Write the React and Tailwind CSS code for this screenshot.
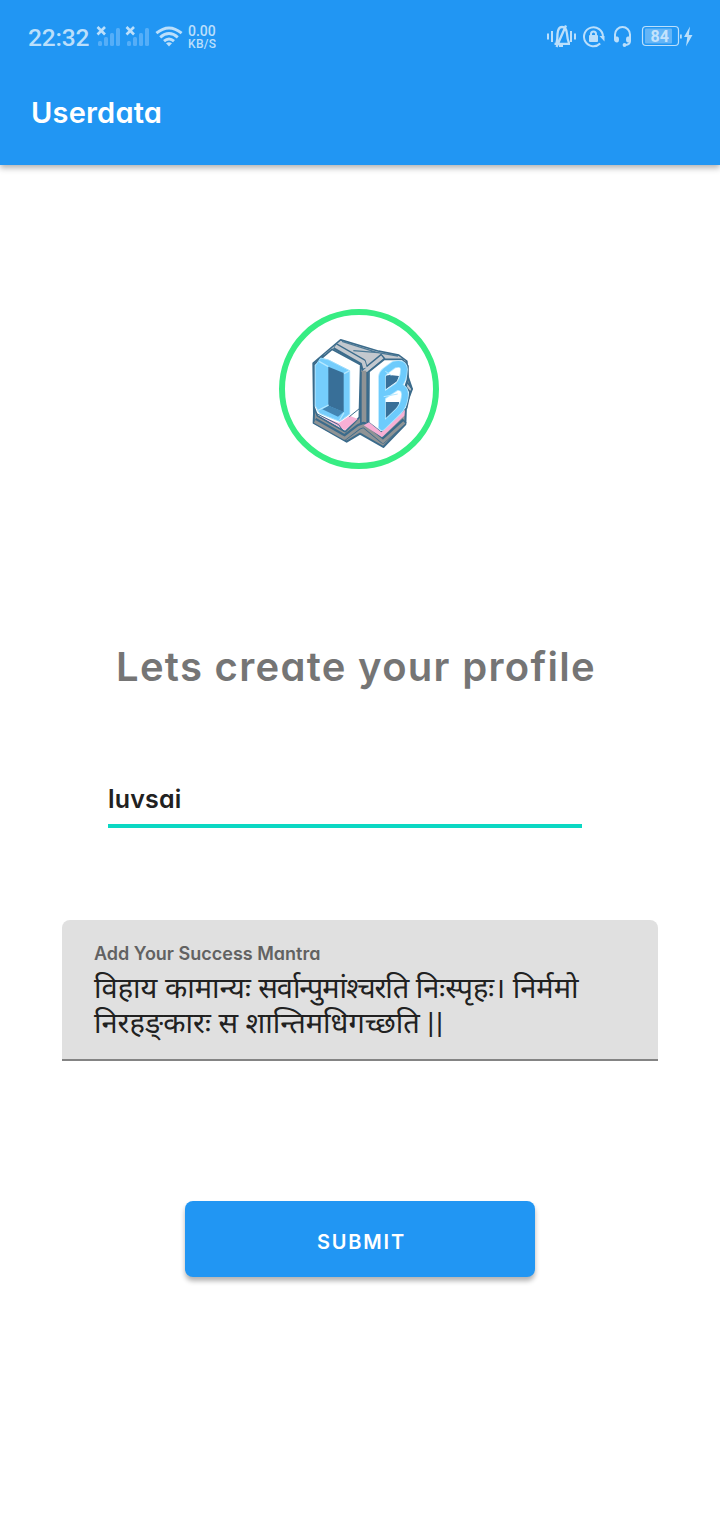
const rounded =
  "font-['Inter',sans-serif] [font-feature-settings:'cv11','ss03'] whitespace-nowrap";

function Signal() {
  return (
    <svg width="25" height="22" viewBox="0 0 25 22">
      <g fill="#55aef8">
        <rect x="2" y="15" width="4" height="5" rx="1.5" />
        <rect x="8" y="11" width="4" height="9" rx="1.5" />
        <rect x="14" y="7" width="4" height="13" rx="1.5" />
        <rect x="20" y="2" width="4" height="18" rx="1.5" />
      </g>
      <path d="M1.5 1l7.500 7.500M9 1l-7.500 7.500" stroke="#bbdffb" strokeWidth="2.6" />
    </svg>
  );
}

function Wifi() {
  return (
    <svg width="28" height="22" viewBox="0 0 28 22" fill="none" stroke="#bbdffb" strokeWidth="2.9">
      <path d="M1.400 7.200Q14-3.200 26.600 7.200M5.200 11.400q8.800-7.600 17.600 0M9 15.200q5-4.400 10 0" />
      <path d="M11 17.200q3-2 6 0l-3 3.300z" fill="#bbdffb" stroke="none" />
    </svg>
  );
}

function StatusIcons() {
  return (
    <svg width="148" height="26" viewBox="546 24 148 26" fill="none" stroke="#bbdffb" strokeWidth="2">
      <path d="M548 33.500v6M552 31v11M571 31v11M575 33.500v6" />
      <path d="M554.500 43.800h15.500M556.500 43q1-3 1-9 .5-7 4.500-7 4.500 0 5 7 .5 6 2 9M566 25.500l-9.500 21.500" strokeWidth="2.300" />
      <path d="M559 46h4" />
      <path d="M600.200 43.500A9.500 9.500 0 1 1 603 36.500" />
      <path d="M599.500 36h5v5.500z" fill="#bbdffb" stroke="none" />
      <rect x="589" y="35" width="9" height="7" rx="1" fill="#bbdffb" stroke="none" />
      <path d="M591 35.500v-1.500a2.500 2.500 0 0 1 5 0v1.500" />
      <path d="M615 38v-3.500a7.500 7.500 0 0 1 15 0v6.500q0 3.500-4.500 4" />
      <path d="M614 36.500h3q2 0 2 3t-2 3q-3-.5-3-3zM631 36.500h-3q-2 0-2 3t2 3q3-.5 3-3z" fill="#bbdffb" stroke="none" />
      <circle cx="624.500" cy="45" r="1.900" fill="#bbdffb" stroke="none" />
      <rect x="642.500" y="26.500" width="36" height="19" rx="3.500" strokeWidth="1.200" />
      <rect x="645" y="28.500" width="27" height="15" rx="1" fill="#64b5f7" stroke="none" />
      <path d="M680 34.500h1.800v4H680zM690 26.500l-6 10.500h3.300l-1.300 9.500 6.500-11.500H688.800z" fill="#bbdffb" stroke="none" />
      <text x="650.500" y="42" fill="#c4e3fc" stroke="none" className="font-['Roboto',sans-serif] text-[16px] font-bold">84</text>
    </svg>
  );
}

function Logo() {
  return (
    <svg width="160" height="160" viewBox="27 27 480 480" strokeLinejoin="round">
      <circle cx="267" cy="267" r="231" fill="#fff" stroke="#37ed83" strokeWidth="18" />
      {/* stone block behind the letters */}
      <path d="M130 190L212 120l114 34 60 12 24 18 4 48 12 35-18 48-2 58-66 68-70-40-40 24-99-56 1-28z" fill="#8f9395" stroke="#3b6b8b" strokeWidth="6" />
      <path d="M160 166l52-44 112 33 62 13 22 16-64 6-60 36-20-30-74-42z" fill="#c3c8ce" />
      <path d="M216 124l106 34M250 152l74 6 60 10" fill="none" stroke="#4b7895" strokeWidth="4" />
      <path d="M194 138l84 48 6 22M340 168l-60 50" fill="none" stroke="#3b6b8b" strokeWidth="20" />
      <path d="M196 138l84 48 5 18M337 171l-55 45" fill="none" stroke="#c3c8ce" strokeWidth="11" />
      <path d="M282 216v156" stroke="#3b6b8b" strokeWidth="24" />
      <path d="M282 212v166" stroke="#8f9395" strokeWidth="14" />
      <path d="M411 246l15 21-11 20-8-12z" fill="#c3c8ce" stroke="#3b6b8b" strokeWidth="4" />
      <path d="M134 362l90 50 43-32 14-6 58 48 65-60" fill="none" stroke="#3b6b8b" strokeWidth="18" />
      <path d="M134 364l90 51 43-33 14-5 58 48 64-58" fill="none" stroke="#8f9395" strokeWidth="9" />
      {/* letter O */}
      <path d="M132 194l54-46 86 46-4 158-42 43-84-48-10-26z" fill="#fff" stroke="#3b6b8b" strokeWidth="5" />
      <path d="M146 346l61 23 32-22 24 10-38 34z" fill="#f8b0d5" />
      <path d="M136 197l16-23 24 6 63 32v130l-30 22-60-24-13-23z" fill="#75cdfc" stroke="#9bddfd" strokeWidth="3" />
      <path d="M175 200l46 19v118l-46-20z" fill="#386f98" />
      <path d="M157 328l19-11 45 18-17 15z" fill="#4385b3" />
      <path d="M147 184l28 16M239 212l-17 9M140 333l36-18M209 360l13-22" stroke="#b5e8ff" strokeWidth="4" />
      <path d="M138 340l68 34 14 20M238 350l30-24" fill="none" stroke="#3b6b8b" strokeWidth="3" />
      {/* letter B */}
      <path d="M297 215l46-37 54 0 17 20-2 42-6 18 14 18-10 48-76 73-38-29z" fill="#fff" stroke="#3b6b8b" strokeWidth="5" />
      <path d="M281 376l16-9 37 30 71-68-2 18-67 65z" fill="#f8b0d5" />
      <path d="M341 228l18-3 28 3-6 16-40 28zM341 306h46v22l-46 32z" fill="#386f98" />
      <path d="M336 380V230q1-10 10-17l26-19q28-8 30 14-1 32-18 50l-46 31M385 261q24 2 19 32-4 26-20 42l-48 46" fill="none" stroke="#b5e8ff" strokeWidth="23" strokeLinecap="round" />
      <path d="M336 380V230q1-10 10-17l26-19q28-8 30 14-1 32-18 50l-46 31M385 261q24 2 19 32-4 26-20 42l-48 46" fill="none" stroke="#6dcbfc" strokeWidth="18" strokeLinecap="round" />
      <path d="M346 214l18 12M341 290l42-8" stroke="#b5e8ff" strokeWidth="3" />
    </svg>
  );
}

export default function App() {
  return (
    <div className="flex h-[1520px] w-[720px] flex-col bg-white">
      <header className="h-[165px] bg-[#2196f3] shadow-[0_3px_6px_rgba(0,0,0,0.3)]">
        <div className="flex h-[74px] items-center justify-between pr-[26px] pl-7 text-[#bbdffb]">
          <div className="flex items-center">
            <span className="mt-px w-[68px] font-['Roboto',sans-serif] text-[24.500px] leading-8 font-medium tracking-[-0.2px]">22:32</span>
            <Signal />
            <span className="w-1" />
            <Signal />
            <span className="ml-[5px]"><Wifi /></span>
            <span className="mt-0.5 ml-[5px] flex flex-col font-['Roboto',sans-serif] text-[14px] leading-[13px] font-medium">
              <span>0.00</span>
              <span className="text-[12px] tracking-[0.3px]">KB/S</span>
            </span>
          </div>
          <StatusIcons />
        </div>
        <h1 className={`${rounded} mt-[19px] ml-[31px] text-[29px] leading-10 font-semibold tracking-[0.2px] text-white`}>Userdata</h1>
      </header>
      <main className="flex flex-col">
        <div className="mt-36 ml-[279px]"><Logo /></div>
        <h2 className={`${rounded} mt-[168px] ml-[116px] text-[40px] leading-[60px] font-semibold tracking-[1.3px] text-[#757575]`}>Lets create your profile</h2>
        <div className={`${rounded} mt-[83px] ml-[108px] h-[48px] w-[474px] border-b-4 border-[#0bd8c3] text-[25px] leading-[38px] font-semibold tracking-[0.2px] text-[#212121]`}>luvsai</div>
        <section className="mt-[92px] ml-[62px] h-[141px] w-[596px] rounded-t-lg border-b-2 border-[#848484] bg-[#e0e0e0] px-8 pt-[22px]">
          <div className={`${rounded} text-[18px] leading-6 font-semibold text-[#626262]`}>Add Your Success Mantra</div>
          <p className="mt-1 font-['Noto_Sans','Noto_Sans_Devanagari',sans-serif] text-[29px] leading-[34.500px] whitespace-nowrap text-[#212121]">
            विहाय कामान्यः <span className="tracking-[-1.100px]">सर्वान्पुमांश्चरति</span> निःस्पृहः। निर्ममो
            <br />
            {"निरहङ्\u200cकारः स शान्तिमधिगच्छति "}
            <span className="font-['Roboto',sans-serif] tracking-[1.500px]">||</span>
          </p>
        </section>
        <button className={`${rounded} mt-[140px] ml-[185px] h-[76px] w-[350px] rounded-lg bg-[#2196f3] pt-1.5 pl-[3px] text-[20px] font-semibold tracking-[1.8px] text-white shadow-[0_4px_5px_rgba(0,0,0,0.3)]`}>SUBMIT</button>
      </main>
    </div>
  );
}
